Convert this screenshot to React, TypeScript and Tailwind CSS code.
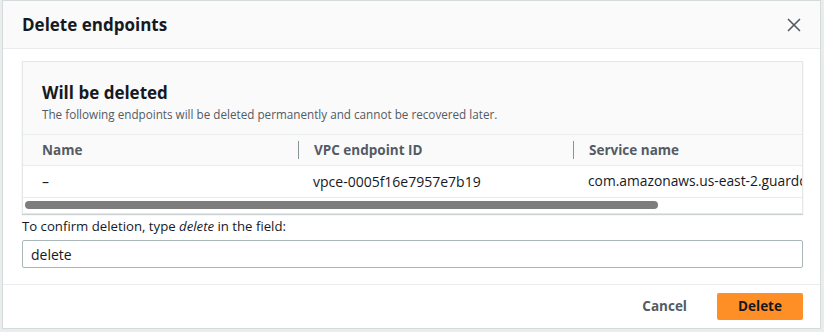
import * as React from "react";
import { X } from "lucide-react";

const font = { fontFamily: '"Open Sans", "Liberation Sans", sans-serif' };

export default function App() {
  return (
    <div className="h-[332px] w-[824px] overflow-hidden bg-[#eaeded]" style={font}>
      <div className="ml-[2px] flex h-[329px] w-[819px] flex-col border border-[#d5dbdb] bg-white text-[#16191f]">
        <div className="flex h-[48px] shrink-0 items-center justify-between border-b border-[#eaeded] bg-[#fafafa] pl-[19px] pr-[17px]">
          <h2 className="text-[17px] font-bold">Delete endpoints</h2>
          <X size={22} strokeWidth={1.8} className="mr-[-2px] text-[#545b64]" />
        </div>

        <div className="flex flex-1 flex-col pl-[19px] pr-[17px] pt-[12px]">
          <div className="overflow-hidden border border-[#e4e7e8] bg-[#fafafa] shadow-[0_1px_1px_rgba(0,28,36,0.2)]">
            <div className="px-[19px] pb-[12px] pt-[19px]">
              <div className="text-[17px] font-bold leading-[24px]">Will be deleted</div>
              <div className="mt-[1px] text-[11.7px] leading-[16px] text-[#545b64]">
                The following endpoints will be deleted permanently and cannot be recovered later.
              </div>
            </div>
            <div className="overflow-hidden whitespace-nowrap">
              <div className="flex h-[32px] w-[1000px] items-center border-y border-[#eaeded] text-[13.5px] font-bold text-[#545b64]">
                <div className="w-[275px] pl-[19px]">Name</div>
                <div className="flex w-[275px] items-center">
                  <span className="h-[18px] w-px bg-[#879596]" />
                  <span className="pl-[15px]">VPC endpoint ID</span>
                </div>
                <div className="flex items-center">
                  <span className="h-[18px] w-px bg-[#879596]" />
                  <span className="pl-[15px]">Service name</span>
                </div>
              </div>
              <div className="flex h-[32px] w-[1000px] items-center border-b border-[#eaeded] bg-white text-[14px]">
                <div className="w-[275px] pl-[19px]">–</div>
                <div className="w-[275px] pl-[15px]">vpce-0005f16e7957e7b19</div>
                <div className="pl-[15px] text-[13.8px]">com.amazonaws.us-east-2.guardduty-data</div>
              </div>
            </div>
            <div className="h-[15px] bg-white px-[2px] pt-[3px]">
              <div className="h-[8px] w-[633px] rounded-full bg-[#7d7d7d]" />
            </div>
          </div>

          <div className="mt-[3px] text-[13.2px] leading-[18px]">
            To confirm deletion, type <i>delete</i> in the field:
          </div>
          <input
            readOnly
            value="delete"
            className="mt-[5px] h-[28px] w-full rounded-[2px] border border-[#aab7b8] px-[8px] text-[14px] text-[#16191f] outline-none"
            style={font}
          />
        </div>

        <div className="flex h-[44px] shrink-0 items-center justify-end gap-[30px] border-t border-[#eaeded] pr-[17px]">
          <button className="text-[13.5px] font-bold text-[#545b64]">Cancel</button>
          <button className="h-[27px] w-[86px] rounded-[2px] bg-[#fd8f26] text-[13.5px] font-bold text-[#16191f]">
            Delete
          </button>
        </div>
      </div>
    </div>
  );
}
